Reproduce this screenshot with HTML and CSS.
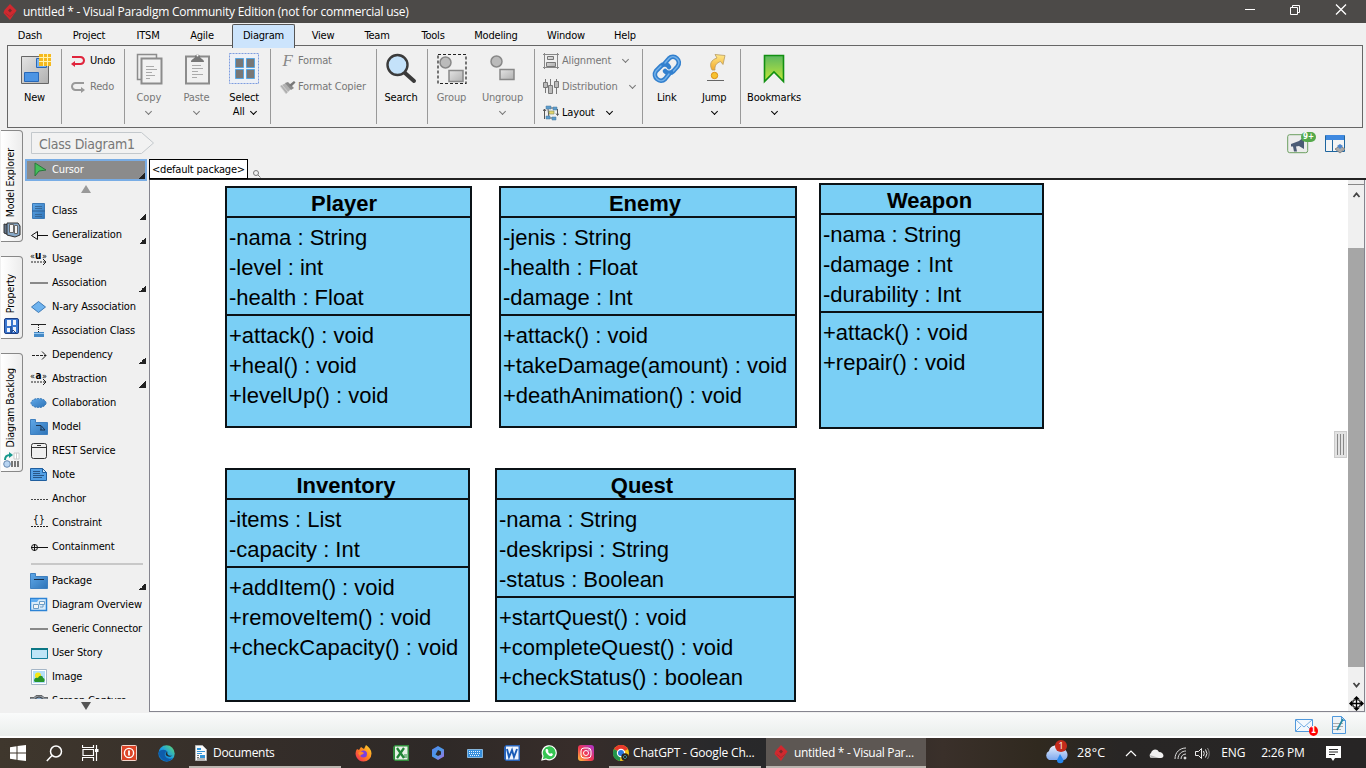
FILE: index.html
```html
<!DOCTYPE html>
<html lang="en">
<head>
<meta charset="utf-8">
<title>untitled * - Visual Paradigm Community Edition</title>
<link rel="stylesheet" href="styles.css">
</head>
<body>
<svg class="defs" width="0" height="0">
  <defs>
    <linearGradient id="blue" x1="0" y1="0" x2="1" y2="1"><stop offset="0" stop-color="#5fa8e8"/><stop offset="1" stop-color="#2f74b8"/></linearGradient>
    <linearGradient id="gray" x1="0" y1="0" x2="1" y2="1"><stop offset="0" stop-color="#e4e4e4"/><stop offset="1" stop-color="#b0b0b0"/></linearGradient>
    <linearGradient id="gold" x1="0" y1="0" x2="0" y2="1"><stop offset="0" stop-color="#ffe98a"/><stop offset="1" stop-color="#f3a92a"/></linearGradient>
    <linearGradient id="green" x1="0" y1="0" x2="0" y2="1"><stop offset="0" stop-color="#5cb860"/><stop offset="1" stop-color="#c4e838"/></linearGradient>
    <linearGradient id="insta" x1="0" y1="1" x2="1" y2="0"><stop offset="0" stop-color="#ffc83d"/><stop offset=".45" stop-color="#f0364e"/><stop offset="1" stop-color="#a934d4"/></linearGradient>
    <linearGradient id="fox" x1="1" y1="0" x2="0" y2="1"><stop offset="0" stop-color="#ffe030"/><stop offset=".5" stop-color="#ff8020"/><stop offset="1" stop-color="#f02060"/></linearGradient>
    <linearGradient id="edge" x1="0" y1="1" x2="1" y2="0"><stop offset="0" stop-color="#0c59a4"/><stop offset=".5" stop-color="#1b9de2"/><stop offset="1" stop-color="#66e068"/></linearGradient>
    <linearGradient id="m365" x1="0" y1="0" x2="1" y2="1"><stop offset="0" stop-color="#5b7ff0"/><stop offset=".5" stop-color="#4a9be8"/><stop offset="1" stop-color="#b06ae0"/></linearGradient>
    <linearGradient id="cloud" x1="0" y1="0" x2="0" y2="1"><stop offset="0" stop-color="#e8f0fc"/><stop offset="1" stop-color="#7fa8ee"/></linearGradient>
    <g id="vp"><path d="M7 0 13.500 6.500 7 16 .5 9l1-3z" fill="#d0292f"/><path d="M7 4.500 9 6.500 7 8.500 5 6.500z" fill="#7a2a2c"/><path d="M2.500 9l4.500 3.500L11.500 9" fill="none" stroke="#8f2a2d" stroke-width=".6"/></g>
  </defs>
</svg>
<div class="window">
  <header class="titlebar">
    <svg class="app-logo" width="14" height="17" viewBox="0 0 14 17"><use href="#vp"/></svg>
    <span class="window-title">untitled * - Visual Paradigm Community Edition (not for commercial use)</span>
    <svg width="104" height="12" viewBox="0 0 104 12" fill="none" stroke="#fff"><path d="M0 5.500h10M45.500 3.500h7v7h-7zM47.500 3.500v-2h7v7h-2"/><path d="M91 .500l10 10M101 .500l-10 10" stroke-width="1.300"/></svg>
  </header>

  <nav class="menu">
    <span>Dash</span><span>Project</span><span>ITSM</span><span class="agile">Agile</span><span class="active">Diagram</span><span>View</span><span>Team</span><span>Tools</span><span>Modeling</span><span>Window</span><span>Help</span>
  </nav>

  <section class="ribbon">
    <div class="group g-new">
      <div class="big"><svg width="32" height="32" viewBox="0 0 32 32"><path d="M2.500 3.500h27v27h-27z" fill="url(#gray)" stroke="#666"/><path d="M5.500 19.500h14v9h-14z" fill="#4b94e4" stroke="#2868b8"/><path d="M17.500 5.500h10v9h-10z" fill="#7db4ee" stroke="#2868b8"/><path d="M20 1h12v12H20z" fill="#f5b91e"/><path d="M24.500 1v12M28.500 1v12M20 4.500h12M20 8.500h12" stroke="#fff3b0" stroke-width="1"/></svg><span>New</span></div>
    </div>
    <div class="group g-undo">
      <div class="small"><svg width="17" height="14" viewBox="0 0 17 14" fill="none" stroke="#e0243c" stroke-width="2"><path d="M2 3h8.500a3.300 3.300 0 0 1 0 7H3"/><path d="M5 7v6L1 10z" fill="#e0243c" stroke="none"/></svg><span class="on">Undo</span></div>
      <div class="small"><svg width="17" height="14" viewBox="0 0 17 14" fill="none" stroke="#999" stroke-width="2"><path d="M14 3H5.500a3.300 3.300 0 0 0 0 7H13"/><path d="M11 7v6l4-3z" fill="#999" stroke="none"/></svg><span>Redo</span></div>
    </div>
    <div class="group g-clip">
      <div class="big off"><svg width="32" height="32" viewBox="0 0 32 32"><path d="M4.500 1.500h19v25h-19z" fill="#eee" stroke="#8c8c8c" stroke-width="1.500"/><path d="M8.500 5.500h20v25h-20z" fill="#f2f2f2" stroke="#8c8c8c" stroke-width="2"/><path d="M13 13.500h8M13 16.500h11M13 19.500h6M13 22.500h9M13 25.500h4" stroke="#aaa"/></svg><span>Copy</span><i class="chev"></i></div>
      <div class="big off"><svg width="32" height="32" viewBox="0 0 32 32"><path d="M5 3.500h23v27H5z" fill="#f0f0f0" stroke="#8c8c8c" stroke-width="2"/><path d="M10 9c0-3 3-3 4-5a2.500 2.500 0 0 1 5 0c1 2 4 2 4 5z" fill="#777"/><circle cx="16.500" cy="2.500" r="1" fill="#fff"/><path d="M11 12.500h9M11 15.500h11M11 18.500h6M11 21.500h11M11 24.500h5" stroke="#aaa"/></svg><span>Paste</span><i class="chev"></i></div>
      <div class="big"><svg width="32" height="32" viewBox="0 0 32 32"><path d="M1.500.500h29v30h-29z" fill="#edf0f6" stroke="#7d9cdf" stroke-dasharray="2 1"/><path d="M7.500 5.500h8v9h-8zM18.500 5.500h8v9h-8zM7.500 16.500h8v9h-8zM18.500 16.500h8v9h-8z" fill="#777" stroke="#58a5e0"/></svg><span>Select</span><span class="row">All <i class="chev"></i></span></div>
    </div>
    <div class="group g-format">
      <div class="small"><b class="fglyph">F</b><span>Format</span></div>
      <div class="small"><svg width="17" height="15" viewBox="0 0 17 15"><path d="M1 6l6-3 5 6-5 5z" fill="#b0b0b0"/><path d="M1 6l6 8M3 5l6 7" stroke="#ddd" stroke-width=".7"/><path d="M6 3l3-1 6 6-3 2z" fill="#8a8a8a"/><path d="M10 5l5-4 1.500 1.500-4 4z" fill="#777"/></svg><span>Format Copier</span></div>
    </div>
    <div class="group g-search">
      <div class="big"><svg width="32" height="32" viewBox="0 0 32 32"><path d="M20 20l9 8" stroke="#3b3b3b" stroke-width="4" stroke-linecap="round"/><circle cx="12.500" cy="12" r="10" fill="#c4e2fa" stroke="#3b3b3b" stroke-width="2.400"/></svg><span>Search</span></div>
    </div>
    <div class="group g-group">
      <div class="big off"><svg width="32" height="32" viewBox="0 0 32 32"><path d="M2 1.500h28v29H2z" fill="none" stroke="#222" stroke-width="1.200" stroke-dasharray="3 2"/><circle cx="9.500" cy="9.500" r="5.500" fill="#bbb" stroke="#888" stroke-width="1.500"/><path d="M13 17.500h14v11H13z" fill="url(#gray)" stroke="#888" stroke-width="1.500"/></svg><span>Group</span></div>
      <div class="big off"><svg width="32" height="32" viewBox="0 0 32 32"><circle cx="9.500" cy="8.500" r="5.500" fill="#bbb" stroke="#888" stroke-width="1.500"/><path d="M13 16.500h14v10H13z" fill="url(#gray)" stroke="#888" stroke-width="1.500"/></svg><span>Ungroup</span><i class="chev"></i></div>
    </div>
    <div class="group g-align">
      <div class="small"><svg width="16" height="16" viewBox="0 0 16 16" fill="url(#gray)" stroke="#888"><path d="M1.500 0v16M0 1.500h16M0 14.500h16M14.500 0v16"/><path d="M4.500 3.500h6v3h-6zM3.500 9.500h9v4h-9z" stroke="#777"/></svg><span>Alignment</span><i class="chev"></i></div>
      <div class="small"><svg width="16" height="16" viewBox="0 0 16 16" fill="#bbb" stroke="#777"><path d="M.500 3.500h4v5h-4zM5.500 6.500h4v8h-4zM11.500 2.500h4v6h-4z"/><path d="M2.500 0v3M2.500 9v5M7.500 0v6M13.500 0v2M13.500 9v6"/></svg><span>Distribution</span><i class="chev"></i></div>
      <div class="small"><svg width="16" height="16" viewBox="0 0 16 16"><path d="M1.500 4v10M14.500 4v6M0 6l1.500-2L3 6M13 8.500l1.500 2 1.500-2M5 4l1 9M7 3h4M5 13h6" fill="none" stroke="#555"/><path d="M3 1h5v3H3zM10 2h4v3h-4zM3 11h4v3H3zM9 12h4v3H9z" fill="#5c9ccc" stroke="#48799c" stroke-width=".5"/><path d="M6 6h5v3H6z" fill="#e8d56c" stroke="#7b8d60" stroke-width=".6"/></svg><span class="on">Layout</span><i class="chev on"></i></div>
    </div>
    <div class="group g-link">
      <div class="big"><svg width="32" height="32" viewBox="0 0 32 32" fill="none" stroke-linecap="round"><g stroke="#3380ce" stroke-width="4.600"><path d="M14 10l4-4.500c5-5 13 2 8.500 8l-4 4.500c-3 3-7 2-8.500 0"/><path d="M18 21l-4 5c-5 5-13-2-9-8l5-5c3-3 7-1.500 8 1"/></g><g stroke="#75b2ea" stroke-width="1.400"><path d="M14 10l4-4.500c5-5 13 2 8.500 8l-4 4.500"/><path d="M18 21l-4 5c-5 5-13-2-9-8l5-5"/></g></svg><span>Link</span></div>
      <div class="big"><svg width="32" height="32" viewBox="0 0 32 32"><path d="M14 17c-3-6-1-10 5-12l-2-3.500 10 1-2 9-2.500-3c-4 1.500-6 4-5.500 8.500z" fill="url(#gold)" stroke="#b89a60" stroke-width=".8"/><circle cx="16.500" cy="22.500" r="3.200" fill="#f7c331" stroke="#db901a"/><path d="M9 27.500h17" stroke="#666"/></svg><span>Jump</span><i class="chev"></i></div>
    </div>
    <div class="group g-book">
      <div class="big"><svg width="32" height="32" viewBox="0 0 32 32"><path d="M6.500 2.500h19v26L16 19l-9.500 9.500z" fill="url(#green)" stroke="#129012" stroke-width="1.600"/></svg><span>Bookmarks</span><i class="chev"></i></div>
    </div>
  </section>

  <main class="workspace">
    <aside class="docks">
      <div class="dock d1"><span>Model Explorer</span><svg width="18" height="16" viewBox="0 0 18 16"><path d="M1 2l5 1v10l-5-2z" fill="#607084" stroke="#333"/><path d="M4 1h11l2 3v9l-5 2-8-2z" fill="#87a8c8" stroke="#333"/><path d="M6.500 2.500h4v8h-4zM11.500 3.500h3v8h-3z" fill="#f3f3f3" stroke="#666"/></svg></div>
      <div class="dock d2"><span>Property</span><svg width="16" height="17" viewBox="0 0 16 17"><rect x=".5" y=".5" width="14" height="15" rx="1.500" fill="#3c78d0" stroke="#1c3f86"/><path d="M3 2h4v6H3zM9 2h3v5H9zM3 10h3v4H3zM9 9h3v5H9z" fill="#f1f4fb"/><path d="M7 8v7l2-3 3 3" stroke="#183e80" fill="none"/></svg></div>
      <div class="dock d3"><span>Diagram Backlog</span><svg width="17" height="16" viewBox="0 0 17 16"><path d="M2 8c0-4 2-5 5-5" stroke="#16988c" stroke-width="2" fill="none"/><path d="M6 0l4 3-4 3z" fill="#16988c"/><circle cx="4" cy="12" r="3.300" fill="#b9d5f2" stroke="#6789b0"/><path d="M11 1h5v6h-5zM13.500 1v6" fill="#fff" stroke="#ccc"/><path d="M8 9h2v6H8zM11 9h2v6h-2zM14 9h2v6h-2z" fill="#777"/></svg></div>
    </aside>

    <div class="center">
      <div class="pathbar">
        <div class="crumb"><svg width="124" height="22" viewBox="0 0 124 22"><path d="M.500.500h110l12 10.500-12 10.500H.500z" fill="#f2f2f2" stroke="#c3c8cc"/></svg><span>Class Diagram1</span></div>
        <div class="path-tools">
          <div class="news"><svg width="22" height="20" viewBox="0 0 22 20"><rect x=".7" y=".7" width="20" height="18" rx="2" fill="#ececec" stroke="#6c9f60"/><path d="M4 10l8-3 5-4v12l-5-3-3 .500 1 5H7l-1-5H4z" fill="#4b5b75"/></svg><b>9+</b></div>
          <svg width="21" height="20" viewBox="0 0 21 20"><path d="M.500 1.500h19v16H.500z" fill="#f4f4f4" stroke="#1e659e"/><path d="M1 1h18v5H1z" fill="#3f89e0"/><path d="M7.500 6v12" stroke="#1e659e"/><path d="M10 15l5-3 5 3-5 4z" fill="#aaa" stroke="#888"/><path d="M12 12l3-2 3 2-3 3z" fill="#4e86cb"/></svg>
        </div>
      </div>

      <div class="editor">
        <div class="palette">
          <div class="tool cursor"><svg width="18" height="18" viewBox="0 0 18 18"><path d="M4 2l11 7-7 1-4 5z" fill="#43bf5a" stroke="#287a3c"/></svg><span>Cursor</span><i class="more"></i></div>
          <i class="up"></i>
          <div class="tools">
            <div class="tool"><svg width="18" height="18" viewBox="0 0 18 18"><path d="M2.500 1.500h12v15h-12z" fill="url(#blue)" stroke="#3d7ab6"/><path d="M2 9h13" stroke="#2c5e94"/><path d="M5 4.500h7M5 6.500h7M5 12.500h7M5 14.500h7" stroke="#345f8c" stroke-width=".8"/></svg><span>Class</span><i class="more"></i></div>
            <div class="tool"><svg width="18" height="18" viewBox="0 0 18 18" fill="none" stroke="#111"><path d="M7 9.500h11M1.500 9.500l6-4v8z"/></svg><span>Generalization</span><i class="more"></i></div>
            <div class="tool"><svg class="txt" width="18" height="18" viewBox="0 0 18 18"><text x="0" y="9" font-size="9">«</text><text x="5" y="9" font-size="10" font-weight="bold">u</text><text x="12" y="9" font-size="9">»</text><path d="M1 12h15" stroke="#222" stroke-dasharray="2 1"/><path d="M13 9l3 3-3 3" fill="none" stroke="#222"/></svg><span>Usage</span></div>
            <div class="tool"><svg width="18" height="18" viewBox="0 0 18 18"><path d="M0 9h18" stroke="#777" stroke-width="1.700"/></svg><span>Association</span><i class="more"></i></div>
            <div class="tool"><svg width="18" height="18" viewBox="0 0 18 18"><path d="M1.500 9l7-5.500 7 5.500-7 5.500z" fill="#6fb3ee" stroke="#3d7ab6"/></svg><span>N-ary Association</span></div>
            <div class="tool"><svg width="18" height="18" viewBox="0 0 18 18"><path d="M1 2.500h15" stroke="#222"/><path d="M8.500 3v7" stroke="#222" stroke-dasharray="1 1"/><path d="M4 10h10v5H4z" fill="#4489c6"/><path d="M4 11.500h10" stroke="#9bc9ef"/></svg><span>Association Class</span></div>
            <div class="tool"><svg width="18" height="18" viewBox="0 0 18 18" fill="none" stroke="#222"><path d="M2 9.500h14" stroke-dasharray="3 1"/><path d="M12 5.500l4 4-4 4"/></svg><span>Dependency</span><i class="more"></i></div>
            <div class="tool"><svg class="txt" width="18" height="18" viewBox="0 0 18 18"><text x="0" y="9" font-size="9">«</text><text x="5.500" y="9" font-size="10" font-weight="bold">a</text><text x="12" y="9" font-size="9">»</text><path d="M1 12h15" stroke="#222" stroke-dasharray="2 1"/><path d="M13 9l3 3-3 3" fill="none" stroke="#222"/></svg><span>Abstraction</span><i class="more"></i></div>
            <div class="tool"><svg width="18" height="18" viewBox="0 0 18 18"><ellipse cx="8.500" cy="9" rx="7.500" ry="4.500" fill="url(#blue)" stroke="#3576b5" stroke-dasharray="2 1"/></svg><span>Collaboration</span></div>
            <div class="tool"><svg width="18" height="18" viewBox="0 0 18 18"><path d="M.500 1.500h5v3h12v12H.500z" fill="url(#blue)" stroke="#3f80c0"/><path d="M6 7.500h5l4 4.500h-5M11 8v4" fill="none" stroke="#182c45" stroke-width=".9"/></svg><span>Model</span></div>
            <div class="tool"><svg width="18" height="18" viewBox="0 0 18 18" fill="#efefef" stroke="#333"><rect x="1.500" y="1.500" width="15" height="15" rx="2"/><path d="M2 5.500h14M7 3.500h4"/></svg><span>REST Service</span></div>
            <div class="tool"><svg width="18" height="18" viewBox="0 0 18 18"><path d="M.500 2.500h12l4 4v8H.500z" fill="#53a0e5" stroke="#205e9e"/><path d="M12.500 2.500v4h4z" fill="#cbe4fa" stroke="#205e9e"/><path d="M3 5.500h7M3 7.500h7M3 9.500h11M3 11.500h9" stroke="#244e7c" stroke-width=".9"/></svg><span>Note</span></div>
            <div class="tool"><svg width="18" height="18" viewBox="0 0 18 18"><path d="M1 9.500h17" stroke="#444" stroke-dasharray="2 1"/></svg><span>Anchor</span></div>
            <div class="tool"><svg class="txt" width="18" height="18" viewBox="0 0 18 18"><text x="3" y="9" font-size="10">{</text><text x="9" y="9" font-size="10">}</text><path d="M1 12.500h17" stroke="#222" stroke-dasharray="2 1"/></svg><span>Constraint</span></div>
            <div class="tool"><svg width="18" height="18" viewBox="0 0 18 18" fill="none" stroke="#111"><circle cx="4.500" cy="9.500" r="3"/><path d="M1 9.500h17M4.500 6v7"/></svg><span>Containment</span></div>
            <hr>
            <div class="tool"><svg width="18" height="18" viewBox="0 0 18 18"><path d="M.500 1.500h5v3h12v12H.500z" fill="url(#blue)" stroke="#3f80c0"/><path d="M4 7.500h10" stroke="#182c45"/></svg><span>Package</span><i class="more"></i></div>
            <div class="tool"><svg width="18" height="18" viewBox="0 0 18 18"><path d="M.500 2.500h16v12H.500z" fill="#d9ebfa" stroke="#2c83d5" stroke-width="1.500"/><path d="M1 3h8l-2 3H1z" fill="#63aef1"/><path d="M3.500 8.500h5v4h-5zM9.500 5.500h5v3h-5zM10 11h3V9" fill="#f5f5f5" stroke="#6d9cc5"/></svg><span>Diagram Overview</span></div>
            <div class="tool"><svg width="18" height="18" viewBox="0 0 18 18"><path d="M0 9h18" stroke="#777" stroke-width="1.700"/></svg><span>Generic Connector</span></div>
            <div class="tool"><svg width="18" height="18" viewBox="0 0 18 18"><path d="M1.500 4.500h16v10h-16z" fill="#bfe5f7" stroke="#127e9b"/><path d="M1 4h17v2H1z" fill="#0b7785"/></svg><span>User Story</span></div>
            <div class="tool"><svg width="18" height="18" viewBox="0 0 18 18"><path d="M1.500 1.500h15v15h-15z" fill="#fff" stroke="#a5b6c7"/><path d="M3 3h12v12H3z" fill="#b4dff9"/><circle cx="8" cy="7.500" r="3" fill="#f4e815"/><path d="M4 13c0-3 2-4 4-3 1-3 5-3 5 0 2 0 2 3 1 4H5z" fill="#27952c"/></svg><span>Image</span></div>
            <div class="tool"><svg width="18" height="18" viewBox="0 0 18 18"><path d="M0 5.500h4l2-2h6l2 2h4V15H0z" fill="#8a939c" stroke="#666"/><circle cx="9" cy="9" r="4" fill="#87a9cb" stroke="#444"/></svg><span>Screen Capture</span></div>
          </div>
          <i class="down"></i>
        </div>

        <div class="diagram-pane">
          <div class="package-row"><span class="package">&lt;default package&gt;</span><svg width="8" height="8" viewBox="0 0 8 8" fill="none" stroke="#777"><circle cx="3" cy="3" r="2.500"/><path d="M5 5l2.500 2.500"/></svg></div>
          <div class="canvas-row">
            <div class="canvas">
              <article class="uml player"><h2>Player</h2><ul><li>-nama : String</li><li>-level : int</li><li>-health : Float</li></ul><ul><li>+attack() : void</li><li>+heal() : void</li><li>+levelUp() : void</li></ul></article>
              <article class="uml enemy"><h2>Enemy</h2><ul><li>-jenis : String</li><li>-health : Float</li><li>-damage : Int</li></ul><ul><li>+attack() : void</li><li>+takeDamage(amount) : void</li><li>+deathAnimation() : void</li></ul></article>
              <article class="uml weapon"><h2>Weapon</h2><ul><li>-nama : String</li><li>-damage : Int</li><li>-durability : Int</li></ul><ul><li>+attack() : void</li><li>+repair() : void</li></ul></article>
              <article class="uml inventory"><h2>Inventory</h2><ul><li>-items : List</li><li>-capacity : Int</li></ul><ul><li>+addItem() : void</li><li>+removeItem() : void</li><li>+checkCapacity() : void</li></ul></article>
              <article class="uml quest"><h2>Quest</h2><ul><li>-nama : String</li><li>-deskripsi : String</li><li>-status : Boolean</li></ul><ul><li>+startQuest() : void</li><li>+completeQuest() : void</li><li>+checkStatus() : boolean</li></ul></article>
              <div class="grip"><i></i><i></i><i></i></div>
            </div>
            <div class="scroll">
              <i class="split"></i>
              <svg width="9" height="6" viewBox="0 0 9 6"><path d="M1.500 5l3-3.500 3 3.500" fill="none" stroke="#444" stroke-width="1.800"/></svg>
              <div class="thumb"></div>
              <svg width="9" height="6" viewBox="0 0 9 6"><path d="M1.500 1l3 3.500 3-3.500" fill="none" stroke="#444" stroke-width="1.800"/></svg>
              <svg class="move" width="15" height="15" viewBox="0 0 15 15"><path d="M7.500 0l3.500 3.500H4zM7.500 15L4 11.500h7zM0 7.500L3.500 4v7zM15 7.500L11.500 11V4z"/><circle cx="7.500" cy="7.500" r="4" fill="#fff" stroke="#000"/><path d="M7.500 2v11M2 7.500h11" stroke="#000" stroke-width="1.300"/></svg>
            </div>
          </div>
        </div>
      </div>
    </div>
  </main>

  <footer class="status">
    <div class="mail"><svg width="19" height="14" viewBox="0 0 19 14"><path d="M.500.500h17v12H.500z" fill="#f3f8fd" stroke="#4f98dc"/><path d="M1 1l8 7 8-7M1 12l5-5M17 12l-5-5" fill="none" stroke="#4f98dc" stroke-width=".8"/></svg><b>1</b></div>
    <svg width="16" height="18" viewBox="0 0 16 18"><path d="M1.500.500h9l4 4v13h-13z" fill="#eef3f7" stroke="#4f98dc"/><path d="M10.500.500v4h4" fill="none" stroke="#4f98dc"/><path d="M2 7.500h10M2 10.500h10M2 13.500h8" stroke="#aaa"/><path d="M12 3L6 14" stroke="#2889a0" stroke-width="1.700"/></svg>
  </footer>

  <footer class="taskbar">
    <svg class="start" width="16" height="16" viewBox="0 0 16 16" fill="#fff"><path d="M0 2.300l6.500-1v6.200H0zM7.500 1.100L16 0v7.500H7.500zM0 8.500h6.500v6.200L0 13.800zM7.500 8.500H16V16l-8.500-1.100z"/></svg>
    <svg class="find" width="17" height="17" viewBox="0 0 17 17" fill="none" stroke="#fff" stroke-width="1.500"><circle cx="10" cy="6.500" r="5.500"/><path d="M6 10.500L.800 16"/></svg>
    <svg class="view" width="17" height="16" viewBox="0 0 17 16" fill="none" stroke="#fff" stroke-width="1.200"><path d="M.500 0v2.500h11V0M.500 16v-3.500h11V16M1 4.500h10.500v6H1zM14.500 0v16"/><path d="M13 4h3.500v3H13z" fill="#fff" stroke="none"/></svg>
    <svg class="office" width="16" height="16" viewBox="0 0 16 16"><rect x=".5" y=".5" width="15" height="15" rx="1" fill="#dc4528" stroke="#f1d5cc"/><circle cx="8" cy="8" r="4.600" fill="none" stroke="#fff" stroke-width="1.400"/><path d="M8 5.500v5" stroke="#fff" stroke-width="1.800"/></svg>
    <svg class="edge" width="17" height="17" viewBox="0 0 17 17"><circle cx="8.500" cy="8.500" r="8.200" fill="url(#edge)"/><path d="M.500 8c1-4 8-4 8.500-1-3 0-3 4 0 6 2 1 4 1 6 0-3 4-8 4-11 1-2-2-3-4-3.500-6z" fill="#0d5cab"/><path d="M9.500 6.500c-1 3 1 5 5 4-2 1.500-4 1.500-5.500.500-2-1-1.500-3.500.500-4.500z" fill="#222b31"/></svg>
    <div class="task docs"><svg width="12" height="16" viewBox="0 0 12 16"><path d="M.500.500h7l4 4v11H.500z" fill="#fafafa" stroke="#b5b5b5"/><path d="M2 3h4v2H2zM2 6h8v1H2zM2 8h5v1H2zM5 10h5v3H5z" fill="#3294d8"/><path d="M2 10.500h2M2 12.500h2M2 14h8" stroke="#777"/></svg><span>Documents</span></div>
    <div class="pinned">
      <svg width="17" height="17" viewBox="0 0 17 17"><path d="M8.500 16.500A8 8 0 0 1 2 4l2 1 2-3 3 2 2-4c3 2 5.500 5 5.500 8.500a8 8 0 0 1-8 8z" fill="url(#fox)"/><circle cx="8.500" cy="9" r="3.500" fill="#7b3fe0"/><path d="M3 8c2-2 4-2 6 0-1 2-3 1-4 3z" fill="#ff8a2a"/></svg>
      <svg width="16" height="16" viewBox="0 0 16 16"><path d="M2 0h14v16H2l-2-2V2z" fill="#318c3c"/><path d="M2 1.500h12.500v13H2z" fill="#e8f3e8"/><path d="M4 3l7 10M11 3L4 13" stroke="#218536" stroke-width="2.300"/><path d="M11 10h3M11 12h3" stroke="#218536"/></svg>
      <svg width="16" height="16" viewBox="0 0 16 16"><path d="M8 1l6 3.500v7L8 15l-6-3.500v-7z" fill="url(#m365)"/><path d="M8 5l3 1.500v3L8 11 5.500 9.500z" fill="#2c292a"/></svg>
      <svg width="16" height="9" viewBox="0 0 16 9"><path d="M.500.500h15v8H.500z" fill="#368fdd" stroke="#9ccbf2" stroke-width=".8"/><path d="M2 2.500h12M2 4.500h12M3 6.500h10" stroke="#eaf4ff" stroke-dasharray="1 1"/></svg>
      <svg width="16" height="16" viewBox="0 0 16 16"><path d="M2 0h14v16H2l-2-2V2z" fill="#2862b7"/><path d="M2 1.500h12.500v13H2z" fill="#edf4ff"/><path d="M3 4l2 8 3-7 2 7 3-8" fill="none" stroke="#195bb6" stroke-width="1.900"/></svg>
      <svg width="16" height="16" viewBox="0 0 16 16"><path d="M1 15l1-4a7 7 0 1 1 3 3z" fill="#35c552" stroke="#fff" stroke-width="1.200"/><path d="M5 4c-2 3 3 8 6 7l1-2-2-1-1 1-2-2 .500-1-1-2z" fill="#fff"/></svg>
      <svg width="16" height="16" viewBox="0 0 16 16" fill="none" stroke="#fff"><rect width="16" height="16" rx="3" fill="url(#insta)" stroke="none"/><rect x="3" y="3" width="10" height="10" rx="3"/><circle cx="8" cy="8" r="2.500"/><circle cx="11" cy="5" r=".3"/></svg>
    </div>
    <div class="task chrome"><svg width="16" height="16" viewBox="0 0 16 16"><circle cx="8" cy="8" r="8" fill="#f4c518"/><path d="M8 8L1 4a8 8 0 0 1 14 0z" fill="#e8392c"/><path d="M8 8L1 4a8 8 0 0 0 6 12z" fill="#23954b"/><circle cx="8" cy="8" r="3.600" fill="#2877df" stroke="#fff" stroke-width="1.200"/><circle cx="12" cy="12" r="3.700" fill="#2b2220"/><path d="M10 12l2-2 2 2-2 2z" fill="none" stroke="#33858a"/></svg><span>ChatGPT - Google Ch...</span></div>
    <div class="task active"><svg width="14" height="17" viewBox="0 0 14 17"><use href="#vp"/></svg><span>untitled * - Visual Par...</span></div>
    <div class="tray">
      <div class="weather"><svg width="25" height="22" viewBox="0 0 25 22"><path d="M5 18a5 5 0 0 1 0-9c1-6 9-8 12-2 7-1 9 9 3 11z" fill="url(#cloud)"/><path d="M16 12l3.500 6a3.200 3.200 0 1 1-6.500 0z" fill="#2786ed"/></svg><b>1</b></div>
      <span class="temp">28°C</span>
      <svg class="caret" width="12" height="7" viewBox="0 0 12 7"><path d="M1 6l5-5 5 5" fill="none" stroke="#fff" stroke-width="1.200"/></svg>
      <svg class="onedrive" width="16" height="11" viewBox="0 0 16 11"><path d="M3 10a3 3 0 0 1 0-5c1-4 6-5 8-1 5 0 6 6 2 6z" fill="#f0f0f0"/><path d="M2 7l9 3H3z" fill="#b9b9b9"/></svg>
      <svg class="wifi" width="13" height="13" viewBox="0 0 13 13" fill="none" stroke="#ddd"><path d="M1 12C1 5 6 1 12 1M4 12c0-5 4-8 8-8M7 12c0-3 2-5 5-5"/><circle cx="11" cy="11" r="1" fill="#fff"/></svg>
      <svg class="sound" width="15" height="13" viewBox="0 0 15 13" fill="none" stroke="#eee"><path d="M.500 4.500h3l3-3v10l-3-3h-3zM8.500 4q1.500 2.500 0 5M10.500 2.500q3 4 0 8"/><path d="M12.500 1q3.500 5.500 0 11" stroke="#888"/></svg>
      <span class="lang">ENG</span><span class="time">2:26 PM</span>
      <svg class="note" width="15" height="15" viewBox="0 0 15 15"><path d="M0 0h15v12H9l-2 3-2-3H0z" fill="#fff"/><path d="M3 3.500h9M3 6h9M3 8.500h6" stroke="#282828"/></svg>
    </div>
  </footer>
</div>
</body>
</html>
```
FILE: styles.css
```css
* { box-sizing: border-box; }
body { margin: 0; overflow: hidden; font: 11px/14px "DejaVu Sans Condensed", "DejaVu Sans", sans-serif; font-stretch: condensed; color: #000; }
svg { display: block; flex: none; }
.defs { position: absolute; }
h2, ul { margin: 0; padding: 0; list-style: none; }
span { white-space: nowrap; }
.window { width: 1366px; height: 768px; display: flex; flex-direction: column; background: #f0f0f0; }

.titlebar { height: 23px; flex: none; background: #4c4a48; color: #fff; display: flex; align-items: center; padding: 1px 17px 0 3px; font: 12px/20px "Open Sans", "Noto Sans", sans-serif; }
.window-title { flex: 1; margin-left: 6px; letter-spacing: -.24px; }
.titlebar > svg:last-child { margin-bottom: 4px; }

.menu { height: 23px; flex: none; padding-left: 3px; display: grid; grid-template-columns: 54px 64px 54px 57px 63px 56px 52px 60px 66px 74px 44px; }
.menu span { text-align: center; line-height: 23px; padding-top: 1px; letter-spacing: -.2px; }
.menu .agile { padding-right: 3px; }
.menu .active { margin: 1px 0 -1px; border: 1px solid #555; border-bottom: 0; background: #cce4fc; line-height: 21px; padding-top: 0; z-index: 1; border-radius: 2px 2px 0 0; }

.ribbon { height: 83px; margin: -1px 3px 0 7px; border: 1px solid #666; display: flex; padding: 3px 0; flex: none; }
.group { border-right: 1px solid #999; display: flex; flex: none; }
.g-new { width: 54px; }
.g-undo { width: 63px; }
.g-clip { width: 146px; padding-right: 2px; }
.g-format { width: 106px; }
.g-search { width: 51px; padding-right: 2px; }
.g-group { width: 107px; padding-right: 4px; }
.g-align { width: 108px; }
.g-link { width: 98px; padding-right: 2px; }
.g-book { width: 66px; border: 0; }
.big { flex: 1; min-width: 0; display: flex; flex-direction: column; align-items: center; padding-top: 4px; letter-spacing: -.15px; }
.g-group .big:first-child { flex: 0 0 47px; }
.big svg { margin-bottom: 6px; }
.big.off { color: #777; }
.chev { width: 5px; height: 5px; border: solid currentColor; border-width: 0 1.500px 1.500px 0; transform: rotate(45deg); margin-top: 4px; flex: none; }
.row { display: flex; gap: 6px; }
.g-undo, .g-format, .g-align { flex-direction: column; padding-top: 0; }
.small { height: 26px; flex: none; display: flex; align-items: center; color: #777; gap: 3px; padding: 0 0 2px 8px; letter-spacing: -.18px; }
.small .on, .small .chev.on { color: #000; }
.small .chev { margin: -3px 0 0 9px; }
.fglyph { width: 17px; text-align: center; font: italic 17px/16px "Liberation Serif", serif; color: #888; }
.g-format .small { gap: 2px; }

.workspace { flex: 1; min-height: 0; display: flex; }
.docks { width: 26px; padding: 2px 3px 0 1px; display: flex; flex-direction: column; gap: 14px; }
.dock { border: 1px solid #888; border-left: 0; border-radius: 0 4px 4px 0; background: linear-gradient(90deg, #fff, #ececec); display: flex; flex-direction: column; align-items: center; justify-content: flex-end; gap: 5px; padding: 0 3px 3px 0; }
.dock span { writing-mode: vertical-rl; transform: rotate(180deg); font-size: 10.500px; letter-spacing: -.1px; }
.dock svg { margin-right: -3px; }
.d1 { height: 112px; }
.d2 { height: 83px; }
.d3 { height: 119px; }
.center { flex: 1; min-width: 0; display: flex; flex-direction: column; }
.pathbar { height: 31px; padding: 4px 20px 0 5px; display: flex; justify-content: space-between; flex: none; }
.crumb { display: grid; align-content: start; }
.crumb > * { grid-area: 1 / 1; }
.crumb span { font-size: 14px; line-height: 24px; color: #777; padding-left: 8px; letter-spacing: -.25px; }
.path-tools { display: flex; gap: 16px; padding-top: 2px; }
.news { position: relative; }
.news b { position: absolute; left: 14px; top: -2px; width: 15px; height: 10px; border-radius: 5px; background: #55a94c; color: #fff; font-size: 8px; line-height: 10px; text-align: center; }

.editor { flex: 1; min-height: 0; display: flex; }
.palette { width: 123px; flex: none; display: flex; flex-direction: column; }
.tool { height: 24px; display: flex; align-items: center; gap: 4px; padding-left: 4px; position: relative; letter-spacing: -.15px; flex: none; }
.cursor { height: 22px; border: 2px solid #79ade5; background: #8b8b8b; color: #fff; padding-left: 4px; gap: 3px; width: 122px; margin-left: -1px; }
.txt { font-family: "DejaVu Sans Condensed", sans-serif; }
.more { position: absolute; right: 3px; bottom: 3px; width: 7px; height: 7px; background: linear-gradient(135deg, transparent 50%, #222 50%); }
.cursor .more { right: 0; bottom: 0; }
.up, .down { align-self: center; flex: none; border: solid transparent; border-width: 0 5px 8px; border-bottom-color: #999; margin: 4px 0 6px -3px; }
.down { border-width: 8px 5px 0; border-top-color: #555; margin: 3px 0 0 -3px; }
.tools { height: 500px; flex: none; overflow: hidden; }
.tools hr { width: 112px; height: 2px; margin: 4px 0 4px 5px; border: 0; background: #c8c8c8; }

.diagram-pane { flex: 1; min-width: 0; display: flex; flex-direction: column; }
.package-row { height: 21px; display: flex; align-items: flex-end; gap: 5px; border-bottom: 2px solid #222; flex: none; }
.package { height: 20px; border: 1px solid #000; background: #fff; padding: 0 2px; line-height: 19px; width: 99px; margin-bottom: -1px; letter-spacing: -.2px; }
.canvas-row { flex: 1; min-height: 0; display: flex; border: 1px solid #85858f; border-top: 0; margin: 0 1px 1px 0; background: #fff; }
.canvas { flex: 1; position: relative; }
.uml { position: absolute; border: 2px solid #0b1216; background: #7acff5; font: 22px/30px "Liberation Sans", Arial, sans-serif; }
.uml h2 { font: bold 22px/32px "Liberation Sans", Arial, sans-serif; height: 28px; text-align: center; }
.uml ul { border-top: 2px solid #0b1216; padding: 5px 0 1px 2px; white-space: nowrap; }
.player { left: 75px; top: 6px; width: 247px; height: 242px; }
.enemy { left: 349px; top: 6px; width: 298px; height: 242px; }
.weapon { left: 669px; top: 3px; width: 225px; height: 246px; }
.inventory { left: 75px; top: 288px; width: 245px; height: 234px; }
.quest { left: 345px; top: 288px; width: 301px; height: 234px; }
.player h2 { padding-right: 9px; }
.enemy h2 { padding-right: 6px; }
.weapon h2 { padding-right: 4px; }
.inventory h2 { padding-right: 3px; }
.quest h2 { padding-right: 7px; }
.grip { position: absolute; right: 1px; top: 251px; width: 13px; height: 27px; border: 1px solid #ccc; background: #e2e2e2; display: flex; justify-content: center; gap: 2px; padding: 2px 0; }
.grip i { width: 1px; background: #888; }
.scroll { width: 16px; background: #f0f0f0; display: flex; flex-direction: column; align-items: center; }
.split { width: 16px; height: 5px; background: #eee; border-bottom: 1px solid #888; margin-bottom: 7px; }
.thumb { width: 16px; height: 419px; background: #a6a6a6; margin: 50px 0 15px; flex: none; }
.move { margin: 8px 0 0 1px; }

.status { height: 25px; flex: none; border-bottom: 2px solid #fff; background: linear-gradient(#fafbfb, #eaeeec); display: flex; justify-content: flex-end; align-items: center; gap: 17px; padding-right: 19px; }
.mail { position: relative; }
.mail svg { margin-top: 2px; }
.mail b { position: absolute; right: -4px; bottom: -3px; width: 9px; height: 10px; border-radius: 50%; background: #f00; color: #fff; font-size: 8px; line-height: 10px; text-align: center; }

.taskbar { height: 30px; flex: none; display: flex; align-items: center; color: #fff; font: 12px/16px "Open Sans", "Noto Sans", sans-serif; background: linear-gradient(90deg, #3f372d, #342d29 20%, #2e2927 32%, #372d2a 42%, #29292b 52%, #272728 60%, #3a302a 69%, #30291f 76%, #282625 82%, #272525); }
.start { margin-left: 10px; }
.find { margin-left: 20px; }
.view { margin-left: 19px; }
.office { margin-left: 22px; }
.edge { margin-left: 21px; }
.task { height: 30px; width: 152px; border-bottom: 2px solid #bbb6b0; display: flex; align-items: center; gap: 6px; padding: 2px 0 0 6px; letter-spacing: -.3px; flex: none; }
.docs { margin-left: 14px; }
.pinned { display: flex; align-items: center; gap: 21px; margin-left: 14px; }
.chrome { margin-left: 15px; padding-left: 4px; gap: 4px; letter-spacing: -.18px; }
.task.active { width: 160px; margin-left: 5px; background: #5d5753; padding-left: 8px; gap: 6px; }
.tray { flex: 1; display: flex; align-items: center; padding-right: 25px; letter-spacing: -.2px; }
.weather { position: relative; margin-left: 118px; }
.weather b { position: absolute; left: 11px; top: -2px; width: 12px; height: 12px; border-radius: 50%; background: #c42b1c; text-align: center; font: 9px/12px "Open Sans", sans-serif; }
.temp { margin-left: 8px; font-size: 12.500px; letter-spacing: .2px; }
.caret { margin-left: 20px; }
.onedrive { margin-left: 11px; }
.wifi { margin-left: 10px; }
.sound { margin-left: 8px; }
.lang { margin-left: 11px; }
.time { margin-left: 16px; }
.note { margin-left: auto; }
```
